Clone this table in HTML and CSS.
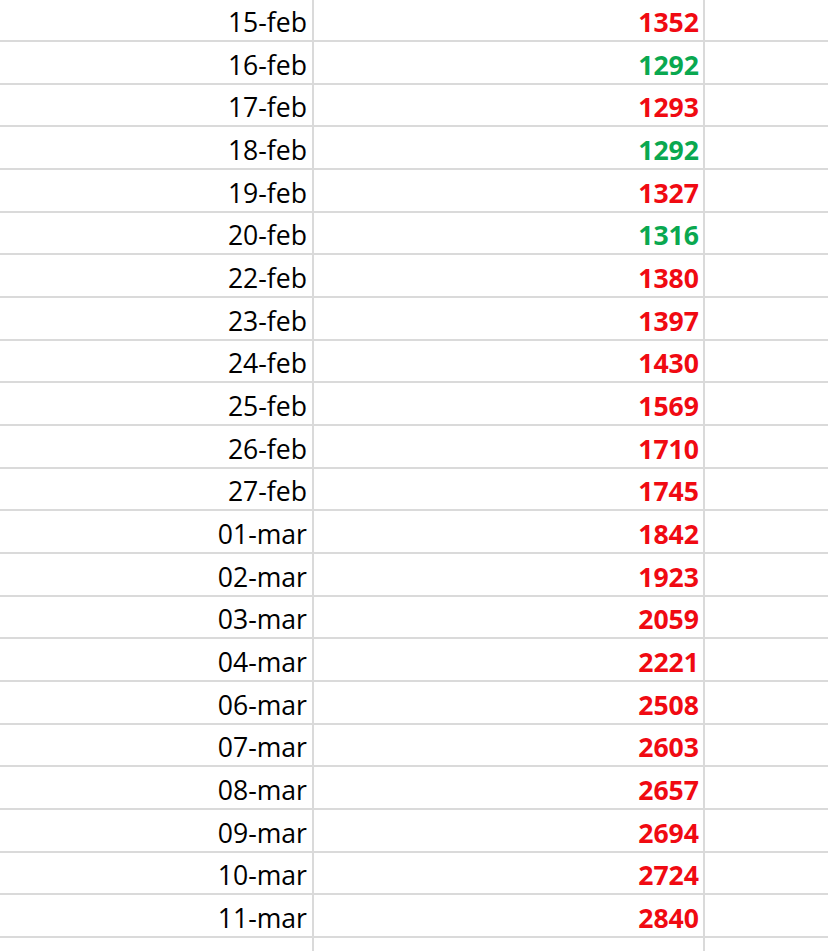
FILE: index.html
```html
<!DOCTYPE html>
<html>
<head>
<meta charset="utf-8">
<link rel="stylesheet" href="styles.css">
</head>
<body>
<div class="sheet">
  <div class="row"><div class="cell date">15-feb</div><div class="cell num up">1352</div><div class="cell"></div></div>
  <div class="row"><div class="cell date">16-feb</div><div class="cell num down">1292</div><div class="cell"></div></div>
  <div class="row"><div class="cell date">17-feb</div><div class="cell num up">1293</div><div class="cell"></div></div>
  <div class="row"><div class="cell date">18-feb</div><div class="cell num down">1292</div><div class="cell"></div></div>
  <div class="row"><div class="cell date">19-feb</div><div class="cell num up">1327</div><div class="cell"></div></div>
  <div class="row"><div class="cell date">20-feb</div><div class="cell num down">1316</div><div class="cell"></div></div>
  <div class="row"><div class="cell date">22-feb</div><div class="cell num up">1380</div><div class="cell"></div></div>
  <div class="row"><div class="cell date">23-feb</div><div class="cell num up">1397</div><div class="cell"></div></div>
  <div class="row"><div class="cell date">24-feb</div><div class="cell num up">1430</div><div class="cell"></div></div>
  <div class="row"><div class="cell date">25-feb</div><div class="cell num up">1569</div><div class="cell"></div></div>
  <div class="row"><div class="cell date">26-feb</div><div class="cell num up">1710</div><div class="cell"></div></div>
  <div class="row"><div class="cell date">27-feb</div><div class="cell num up">1745</div><div class="cell"></div></div>
  <div class="row"><div class="cell date">01-mar</div><div class="cell num up">1842</div><div class="cell"></div></div>
  <div class="row"><div class="cell date">02-mar</div><div class="cell num up">1923</div><div class="cell"></div></div>
  <div class="row"><div class="cell date">03-mar</div><div class="cell num up">2059</div><div class="cell"></div></div>
  <div class="row"><div class="cell date">04-mar</div><div class="cell num up">2221</div><div class="cell"></div></div>
  <div class="row"><div class="cell date">06-mar</div><div class="cell num up">2508</div><div class="cell"></div></div>
  <div class="row"><div class="cell date">07-mar</div><div class="cell num up">2603</div><div class="cell"></div></div>
  <div class="row"><div class="cell date">08-mar</div><div class="cell num up">2657</div><div class="cell"></div></div>
  <div class="row"><div class="cell date">09-mar</div><div class="cell num up">2694</div><div class="cell"></div></div>
  <div class="row"><div class="cell date">10-mar</div><div class="cell num up">2724</div><div class="cell"></div></div>
  <div class="row"><div class="cell date">11-mar</div><div class="cell num up">2840</div><div class="cell"></div></div>
  <div class="row"><div class="cell date"></div><div class="cell num"></div><div class="cell"></div></div>
</div>
</body>
</html>
```
FILE: styles.css
```css
html, body {
  margin: 0;
  padding: 0;
  background: #ffffff;
  overflow: hidden;
}
.sheet {
  margin-top: -0.5px;
  font-family: "Open Sans", "Noto Sans", sans-serif;
  font-size: 26.6px;
  color: #000000;
}
.row {
  display: grid;
  grid-template-columns: 314px 391px 1fr;
  height: 42.667px;
  box-sizing: border-box;
  border-bottom: 2px solid #dadada;
}
.cell {
  display: flex;
  align-items: flex-end;
  justify-content: flex-end;
  box-sizing: border-box;
  border-right: 2px solid #dadada;
  padding: 0 5px 0 0;
  line-height: 36px;
  white-space: nowrap;
}
.cell:last-child {
  border-right: none;
}
.num {
  font-weight: 700;
  padding-right: 4px;
}
.up {
  color: #f00a12;
}
.down {
  color: #0aa850;
}
```
